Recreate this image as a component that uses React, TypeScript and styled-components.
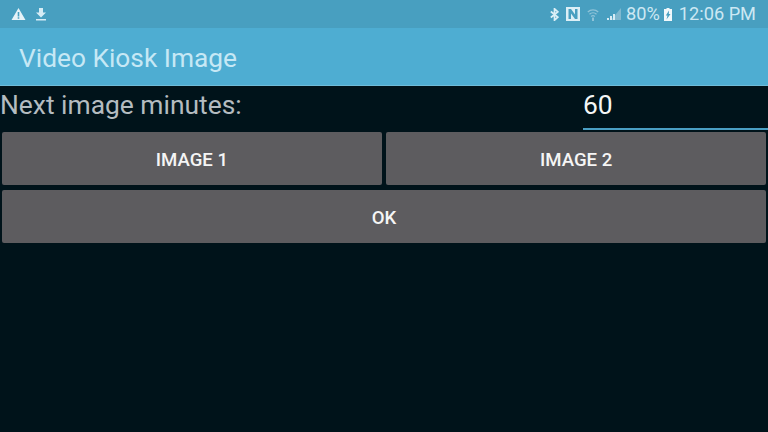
import React from "react";
import styled, { createGlobalStyle } from "styled-components";

const Global = createGlobalStyle`
  html, body { margin: 0; padding: 0; background: #00131a; }
  * { box-sizing: border-box; }
`;

const Screen = styled.div`
  width: 768px;
  height: 432px;
  overflow: hidden;
  background: #00131a;
  font-family: Roboto, "Liberation Sans", sans-serif;
  display: flex;
  flex-direction: column;
`;

const StatusBar = styled.div`
  height: 28px;
  background: #489fc0;
  color: #cde8f3;
  display: flex;
  align-items: center;
  justify-content: space-between;
  padding: 0 12px 0 11px;
`;

const NoticeIcons = styled.div`
  display: flex;
  align-items: center;
  gap: 9px;
`;

const SystemIcons = styled.div`
  display: flex;
  align-items: center;
  gap: 7px;
`;

const StatusText = styled.span`
  font-size: 18.2px;
  line-height: 28px;
  white-space: nowrap;
`;

const Percent = styled(StatusText)`
  margin-left: -2px;
  margin-right: -3px;
`;

const AppBar = styled.div`
  height: 58px;
  background: #4eadd2;
  border-bottom: 1px solid #6fbcd9;
  display: flex;
  align-items: center;
  padding: 2px 20px 0 19px;
`;

const Title = styled.h1`
  margin: 0;
  font-size: 26.3px;
  font-weight: 400;
  color: #c6e8f5;
`;

const Content = styled.div`
  display: flex;
  flex-direction: column;
  padding: 0 2px;
`;

const FieldRow = styled.div`
  height: 46px;
  display: flex;
  align-items: flex-start;
`;

const Label = styled.div`
  width: 581px;
  margin-left: -2px;
  margin-right: 2px;
  font-size: 26.4px;
  line-height: 39px;
  color: #b4bcc0;
`;

const Input = styled.div`
  flex: 1;
  height: 44px;
  margin-right: -2px;
  border-bottom: 2px solid #4a9fc4;
  font-size: 26.4px;
  line-height: 39px;
  color: #f4f6f6;
`;

const ButtonRow = styled.div`
  display: flex;
  gap: 4.5px;
  margin-bottom: 5px;
`;

const Button = styled.button`
  flex: 1;
  height: 53px;
  padding: 2px 0 0;
  border: 0;
  border-radius: 2px;
  background: #5d5c5f;
  color: #f5f5f5;
  font-family: inherit;
  font-size: 18.6px;
  font-weight: 500;
`;

const Icon = styled.svg`
  display: block;
  flex: none;
`;

export default function App() {
  return (
    <Screen>
      <Global />
      <StatusBar>
        <NoticeIcons>
          <Icon width="15" height="14" viewBox="0 0 15 14">
            <path fillRule="evenodd" fill="#e6f3f8" d="M7.500 1 14.500 13H.5ZM6.700 5v4.400h1.600V5ZM6.700 10.200v1.600h1.600v-1.600Z" />
          </Icon>
          <Icon width="12" height="14" viewBox="0 0 12 14">
            <path fill="#d6ecf5" d="M4 1h4v4.500h3L6 10.500 1 5.500h3ZM1 12h10v1.500H1Z" />
          </Icon>
        </NoticeIcons>
        <SystemIcons>
          <Icon width="9" height="13" viewBox="0 0 9 13">
            <path fill="none" stroke="#dcEff6" strokeWidth="1.700" d="M.8 3.500l7 5.700-3.300 3V.8l3.300 3-7 5.700" />
          </Icon>
          <Icon width="14" height="14" viewBox="0 0 14 14">
            <path fillRule="evenodd" fill="#dcEff6" d="M0 0h14v14H0ZM2.500 2v10h2.500V6.500L9 12h2.500V2H9v5.500L5 2Z" />
          </Icon>
          <Icon width="12" height="13" viewBox="0 0 12 13">
            <path fill="none" stroke="#8fc3d8" strokeWidth="1.300" d="M.8 4a7.500 7.500 0 0 1 10.400 0M2.500 6.300a5 5 0 0 1 7 0M4.200 8.500a2.600 2.600 0 0 1 3.600 0" />
            <path fill="#8fc3d8" d="M5 9.500h2V13H5Z" />
          </Icon>
          <Icon width="15" height="12" viewBox="0 0 15 12">
            <path fill="#7fb8cf" d="M15 0v12H5Z" />
            <path fill="#d6ecf5" d="M1 10h2v2H1ZM4 8h2v4H4ZM7 6h2v6H7Z" />
          </Icon>
          <Percent>80%</Percent>
          <Icon width="8" height="13" viewBox="0 0 8 13">
            <path fillRule="evenodd" fill="#f1f8fb" d="M2.500 0h3v1H8v12H0V1h2.500ZM5 2.500 1.800 7.500h1.700L2.500 11.500l4-5.500H4.800Z" />
          </Icon>
          <StatusText>12:06 PM</StatusText>
        </SystemIcons>
      </StatusBar>
      <AppBar>
        <Title>Video Kiosk Image</Title>
      </AppBar>
      <Content>
        <FieldRow>
          <Label>Next image minutes:</Label>
          <Input>60</Input>
        </FieldRow>
        <ButtonRow>
          <Button>IMAGE 1</Button>
          <Button>IMAGE 2</Button>
        </ButtonRow>
        <ButtonRow>
          <Button>OK</Button>
        </ButtonRow>
      </Content>
    </Screen>
  );
}
